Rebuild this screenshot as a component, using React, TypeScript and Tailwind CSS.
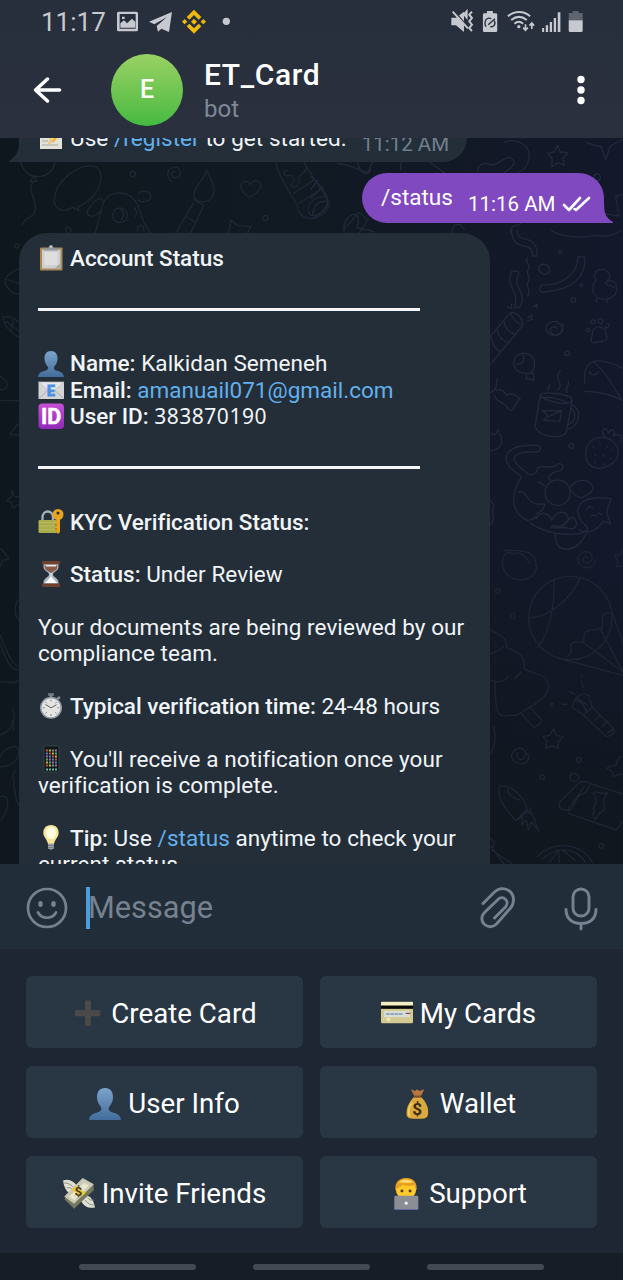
import type { ReactNode } from "react";

type EmojiName =
  | "memo" | "clipboard" | "person" | "mail" | "id" | "lock" | "hourglass" | "stopwatch"
  | "phone" | "bulb" | "plus" | "card" | "bag" | "wings" | "support";

const keypadColors = ["#c9544b", "#5fae62", "#5585c9", "#d8b04a", "#b66bb0"];

const emojiArt: Record<EmojiName, ReactNode> = {
  memo: (
    <>
      <rect x="2" y="3" width="22" height="21" fill="#e4e1d8" />
      <path d="M4 8h9M4 12h7M4 16h6M4 20h16" stroke="#a9a79f" strokeWidth="1" />
      <path d="M10 19l2-5L21 3l4 3-9 11z" fill="#f0b92c" />
      <path d="M12 14L21 3l2 1.500-9 11z" fill="#ffdc66" />
      <path d="M10 19l2-5 4 3z" fill="#e8c79c" />
      <path d="M21 3l2-2 4 3-2 2z" fill="#e7837c" />
    </>
  ),
  clipboard: (
    <>
      <rect x="2" y="2.500" width="22.500" height="23" rx="1" fill="#a98758" />
      <path d="M4 4.500h18.500V23.500H4z" fill="#cfcfd1" />
      <rect x="6.500" y="7" width="13" height="13" fill="#dededd" />
      <path d="M5 5.500l3-2.500h2.500c0-4 5-4 5 0H18l3 2.500z" fill="#8f959b" />
      <circle cx="13" cy="1.700" r="1" fill="#d5d8da" />
      <path d="M22.500 23.500l-5.500-1 5.500-4z" fill="#aaa9a6" />
    </>
  ),
  person: (
    <>
      <defs>
        <linearGradient id="personFill" x1="0" y1="0" x2="0" y2="1">
          <stop offset="0" stopColor="#7ba4cb" />
          <stop offset="1" stopColor="#426c9b" />
        </linearGradient>
      </defs>
      <path
        d="M13 0C8.500 0 6.300 3.400 6.500 8c.1 3 1.500 5.500 3.200 7.500.8 2 .1 3.400-2 4.100C3 21 .5 22 0 26h26c-.5-4-3-5-7.700-6.400-2.100-.7-2.800-2.100-2-4.100C18 13.500 19.400 11 19.500 8 19.700 3.400 17.500 0 13 0z"
        fill="url(#personFill)"
      />
    </>
  ),
  mail: (
    <>
      <rect x="0.500" y="5" width="25.500" height="17" fill="#d3d4d6" />
      <path d="M1 21.500l8.500-8M25.500 21.500l-8.500-8" stroke="#adb0b5" strokeWidth="1" />
      <path d="M.5 5l12.700 11L26 5z" fill="#e6e6e7" stroke="#b9bbc0" strokeWidth="0.700" />
      <text x="13" y="18.500" textAnchor="middle" fontSize="14" fontWeight="700" fill="#4b8fe0" stroke="#4b8fe0">E</text>
    </>
  ),
  id: (
    <>
      <defs>
        <linearGradient id="idFill" x1="0" y1="0" x2="0" y2="1">
          <stop offset="0" stopColor="#c84fd6" />
          <stop offset="1" stopColor="#9028b8" />
        </linearGradient>
      </defs>
      <rect x="0.500" y="0.500" width="25.500" height="25.500" rx="4" fill="url(#idFill)" />
      <text x="13.200" y="20.700" textAnchor="middle" fontSize="21.500" fontWeight="700" fill="#fff" stroke="#fff" strokeWidth="0.500">ID</text>
    </>
  ),
  lock: (
    <>
      <path d="M4.500 12V8.500c0-8 10.500-8 10.500 0V12" fill="none" stroke="#9fb2bd" strokeWidth="2.300" />
      <rect x="0.500" y="11" width="18.500" height="13" rx="1" fill="#a9ac4d" />
      <path d="M1 13.500h18M1 17h18M1 20.500h18" stroke="#b8bb5f" strokeWidth="1" />
      <circle cx="20" cy="5.500" r="5.500" fill="#e9a521" />
      <circle cx="20" cy="4" r="1.500" fill="#232e3a" />
      <path d="M18.500 10h3.500v13l-2 2-1.500-2z" fill="#e9a521" />
      <path d="M17 15h2v2h-2zM17 19h2v2h-2z" fill="#c98313" />
    </>
  ),
  hourglass: (
    <>
      <path d="M5.500 3h15v3c0 4-5.500 5-5.500 7.500s5.500 3.500 5.500 8V24h-15v-2.500c0-4.500 5.500-5.500 5.500-8S5.500 10 5.500 6z" fill="#a9b5bf" />
      <path d="M6.500 4.500h13l-1 4-5.500 3.500L7.500 8.500z" fill="#8b5a45" />
      <path d="M8 4h10v1.500H8z" fill="#e5e9ec" />
      <path d="M7 22l6-6.500 6 6.500z" fill="#fff" />
      <rect x="4" y="0" width="18" height="3.200" rx="1" fill="#71402c" />
      <rect x="4" y="22.500" width="18" height="3.500" rx="1" fill="#71402c" />
      <path d="M12.500 12h1v9h-1z" fill="#eef2f5" />
    </>
  ),
  stopwatch: (
    <>
      <rect x="10" y="0" width="6" height="3" rx="1" fill="#6b7178" />
      <path d="M13 2v4M19 6l3-2" stroke="#858b91" strokeWidth="2.500" />
      <circle cx="13" cy="14.800" r="11" fill="#929aa1" />
      <circle cx="13" cy="14.800" r="9.500" fill="#e4e4e4" />
      <path d="M13 6.500v2M13 21v2M4.800 14.800h2M19.300 14.800h2M7.300 9l1.400 1.400M18.700 9l-1.400 1.400M7.300 20.600l1.400-1.400M18.700 20.600l-1.400-1.400" stroke="#888" strokeWidth="1" />
      <path d="M7.500 11.500l5.500 3.300 5.500-3" fill="none" stroke="#66615e" strokeWidth="1" />
    </>
  ),
  phone: (
    <>
      <rect x="6" y="0" width="15" height="26" rx="1.500" fill="#10161a" stroke="#365048" strokeWidth="0.800" />
      {[0, 1, 2, 3, 4, 5].flatMap((row) =>
        [0, 1, 2, 3].map((col) => (
          <rect key={`${row}-${col}`} x={7.9 + col * 3} y={3.5 + row * 3} width="2" height="2" fill={keypadColors[(row * 2 + col * 3) % 5]} />
        )),
      )}
      <path d="M8 23.500h11" stroke="#66b4a4" strokeWidth="2" strokeDasharray="2 1" />
    </>
  ),
  bulb: (
    <>
      <path d="M13 0c-5 0-7.700 3.600-7.700 7.700 0 4.300 4 6.600 4.700 11.300h6c.7-4.700 4.700-7 4.700-11.300C20.700 3.600 18 0 13 0z" fill="#f7e59a" />
      <ellipse cx="13" cy="8" rx="5" ry="6" fill="#fffbe0" />
      <rect x="10" y="18.500" width="6" height="5.500" rx="1" fill="#9aa0a4" />
      <path d="M10 20.500h6M10 22.500h6" stroke="#6d7377" strokeWidth="0.700" />
      <path d="M12 24h2v1.200h-2z" fill="#666" />
    </>
  ),
  plus: <path d="M10.600 2h4.800v8H23v4.800h-7.600v7.800h-4.800v-7.800H2.500V10h8.100z" fill="#4b4a48" />,
  card: (
    <>
      <rect x="0" y="3" width="26" height="17.500" rx="1" fill="#d4ca91" />
      <path d="M0 4.500h26" stroke="#f2edc4" strokeWidth="2.500" />
      <rect x="0" y="6.200" width="26" height="2.600" fill="#080a09" />
      <rect x="2.500" y="10.500" width="21" height="5" fill="#d9ded8" />
      <path d="M4 13h14" stroke="#91a8bd" strokeWidth="1.600" strokeDasharray="3 .5" />
      <path d="M20 12.500h4" stroke="#7f4f54" strokeWidth="1" />
      <circle cx="6" cy="17.500" r="1.600" fill="#ece7b8" />
    </>
  ),
  bag: (
    <>
      <path d="M8 1l3.500 1.500L13 1l2 1.500L19 1l-3 6h-5z" fill="#ba7840" />
      <path d="M11 7h5c4 4 6.500 8.500 6 14-.3 3-2 4-5 4H9.500c-3.500 0-5-1.500-5-4C4.500 15 7 11 11 7z" fill="#dca93c" />
      <path d="M9 12c-3 4-3.300 8-2 11" fill="none" stroke="#f3ce6a" strokeWidth="1.500" />
      <path d="M10.500 7h6" stroke="#7a4b26" strokeWidth="1.700" />
      <text x="13.200" y="22" textAnchor="middle" fontSize="14" fontWeight="700" fill="#3a2c18">$</text>
    </>
  ),
  wings: (
    <>
      <path d="M0 2c5-2 9 1 12 5L8 13c-4 0-7-4-8-11z" fill="#dfdfd3" />
      <path d="M26 24c-5 1-9-1-11-5l3-5c4 0 7 4 8 10z" fill="#dfdfd3" />
      <path d="M1 4c3 0 6 1.500 8 4M3 8c2-.5 4 0 5 1.500M25 22c-3 0-5-1.500-7-4M25 18c-2 .5-4-.5-5-2" fill="none" stroke="#8f9386" strokeWidth="0.800" />
      <path d="M1 17L17 1l8 5v4L9 25z" fill="#75775e" />
      <path d="M1 15L16 0l9 5L9 21z" fill="#cbcbb3" />
      <path d="M5 15L17 4l4 2L9 18z" fill="#e9e6cf" />
      <path d="M7 9.500l3-3 8.500 5.500-3 3z" fill="#edc537" />
      <text x="12.500" y="15" textAnchor="middle" fontSize="11" fontWeight="700" fill="#4a4022">$</text>
    </>
  ),
  support: (
    <>
      <path d="M3 26c.5-5 3.500-7 10-7s9.500 2 10 7z" fill="#3646b6" />
      <ellipse cx="13" cy="9" rx="8.300" ry="8.800" fill="#ffc92a" />
      <path d="M4.500 10C3.500 3 8-.3 13.500.2 19-.4 22.500 4 21.500 10c-1-1-1.300-2.800-1.500-4.300-4 1.600-8 .3-10-.2C8.800 8 6 7.500 4.500 10z" fill="#e79f20" />
      <path d="M7 4c3-4 9-3.500 12-.5-4 1-8-.5-12 .5z" fill="#ffdc70" />
      <circle cx="9.700" cy="10.500" r="1.200" fill="#593a16" />
      <circle cx="16.300" cy="10.500" r="1.200" fill="#593a16" />
      <rect x="3.500" y="14.500" width="19.500" height="11" rx="1" fill="#8c8e96" />
      <circle cx="13.200" cy="20.500" r="1.200" fill="#fff" />
    </>
  ),
};

function Emoji({ name, className = "size-[26px]" }: { name: EmojiName; className?: string }) {
  return (
    <svg viewBox="0 0 26 26" className={`shrink-0 overflow-visible ${className}`} fontFamily="Roboto, sans-serif">
      {emojiArt[name]}
    </svg>
  );
}

function Line({ icon, children }: { icon?: EmojiName; children?: ReactNode }) {
  return (
    <div className="flex h-[26.36px] items-center whitespace-pre">
      {icon && <Emoji name={icon} className="mr-[6px] size-[26px]" />}
      <span className="leading-[26.36px]">{children}</span>
    </div>
  );
}

function Rule() {
  return (
    <div className="flex h-[26.36px] items-start pt-[10.500px]">
      <div className="h-[3px] w-[382px] bg-[#f4f6f8]" />
    </div>
  );
}

function B({ children }: { children: ReactNode }) {
  return <span className="font-medium tracking-[-0.03px]">{children}</span>;
}

function Doodles() {
  return (
    <svg viewBox="0 138 623 726" className="absolute inset-0 h-full w-full" fill="none" stroke="#22293b" strokeWidth="4" strokeLinecap="round" strokeLinejoin="round">
      <g transform="translate(0 120) scale(.33333)" stroke="#1d2832">
        <path d="M62 128c8 30 30 43 52 42 28-2 48-18 50-42M100 170l-10 14h20l-8-14M100 184c-24 30 16 50 4 90-8 26-34 16-38 42" />
        <path d="M190 272c-44-8-30-70 14-106 44-36 90-38 98-6 8 40-28 86-68 100l2 12-18-10q-14 8-28 10z" />
        <path d="M286 338l24-90c20-40 80-40 104 8l18 52 18 30M310 246c-4-20-24-8-34 8-18 20-18 30-6 34 16 2 24-6 30-14M414 240c12 10 36 4 38-8 6-18-26-24-36-12" />
        <circle cx="360" cy="286" r="22" /><path d="M362 268c12 8 12 22 0 32M404 264c8 10 8 18 0 30M412 334c0-26 20-24 20 0" />
        <circle cx="398" cy="162" r="8" />
        <path d="M514 184c-16-14-14-36 6-42 24-4 30 28 6 32-14 0-16-20-2-20" />
        <path d="M620 150c-4 30-40 46-38 76 2 28 58 28 60-12 2-20-12-44-22-64zM582 238l28 18M580 250l-52 88M610 258l-38 80M558 290l28 16" />
        <path d="M748 232c-22-14-34-38-18-46 14-8 20 8 20 8s12-20 28-8c14 14-8 38-30 46z" />
        <path d="M828 128c4 30 30 70 64 128M912 128l76 120M892 256c2 28 26 48 60 36 30-14 36-28 36-44M862 152c-18-4-10 22 4 14 14-4 24 16 6 28 10 20 32-4 24-16-8-12 24-16 22-34" />
        <path d="M880 220l60-38M896 250l66-42M924 270c0-20 20-42 52-40M926 276c6 24 44 6 56-26" />
        <circle cx="796" cy="294" r="8" />
        <path d="M686 338l6-38 20 16 40 4-10 20M1030 330l46-52 28 20-28 42M202 338c-16-18 10-24 12-4" />
      </g>
      <g transform="translate(311 0) scale(.33333)">
        <path d="M740 436l8 20 22 2-14 18 4 20-18-8-20 12 2-24-14-16 20-4z" />
        <path d="M826 428c20 4 28 12 44 10l14 42 14-42 38-20M80 490c50 6 80 30 90 26s4-30 24-34M140 486c10 50 40 36 38 20M270 510c-10-40 40-70 76-30l54 38M500 516c0-28 20-28 40-22s40-30 60-20 0 34-20 42M580 426c50-14 80 20 74 48-4 24-12 34-28 42" />
        <circle cx="858" cy="532" r="10" />
        <path d="M0 530c30 26 60 60 48 90-12 20-38 34-48 36M20 540l-20 28M36 560l-36 34M4 646c4-30 20-44 44-42M100 696c-8-30 20-60 36-52 20 20-12 38 12 42 16 6 20-2 40 10M420 700c10-40 30-28 40-12M600 700c-10-30 30-20 30-32M864 590c20 28 20 34 10 50l50 8-10-60 20-4" />
      </g>
      <g transform="translate(311 230) scale(.33333)">
        <path d="M602 0c0 34 14 44 38 48s26 18 24 30h14c2-30-8-44-32-50s-28-14-26-28M650 82c-14 16 12 20 2 36s10 20 0 36 10 24-2 44" />
        <path d="M610 232c20-44-30-66-8-108 20-4 26 4 18 16-16 30 32 48 6 92zM800 80c4 54-54 88-106 84-16 12-4 28 6 22 56-4 124-24 122-104zM694 130c-20-10-10-30 8-26 22 2 16 34-6 28-14-6-18-24-4-30" />
        <path d="M856 150c-12-18 0-32 18-32s30 22 16 36c22-8 30 12 26 30-6 30-60 34-70 0-2-16 0-24 10-34zM890 150l-8 10 30 14M856 206v12M888 206v12" />
        <circle cx="787" cy="210" r="7" /><circle cx="811" cy="166" r="4" /><circle cx="747" cy="66" r="5" /><circle cx="769" cy="370" r="7" /><circle cx="781" cy="648" r="7" />
        <path d="M536 322l62-74c16-4 42 18 36 40l-92 110M598 248c8 20 20 32 36 36M578 272c6 26 16 38 38 40M558 298c6 26 18 38 38 40M540 318c6 28 12 40 28 46M590 230l10 6 2-14M650 272l14-4-2-12-12 8M666 230l14-8-4 12" />
        <path d="M754 280c16 26-28 54-46 24-14-28 36-44 44-12 4 24-32 32-34 8 0-10 16-14 20-4" />
        <path d="M846 298c18-12 24-8 36 0l6 28c-8 12-12 8-22 8-14 4-20 8-26 0zM828 296c8-4 12 4 6 8s-10-4-6-8zM844 270c12-4 12 12 2 12-10-2-10-10-2-12zM866 266c12-2 12 14 2 16-8-4-10-12-2-16zM890 280c12 2 0 18-8 12" />
        <path d="M646 430c-44 4-50-54-14-60 38-8 52 46 24 60M616 400c14 10 28-12 20-28M646 430v16l22 4v-20zM538 488l16-12 4-28M556 482c16-8 24 2 30 14 12-10 34 4 42 10-14 8-18 30-26 36-14-2-16-20-26-22-14-4-24-16-24-24" />
        <path d="M688 494l-16 96c10 32 84 40 94 16l18-98c-10-18-90-24-96-14zM688 494c10 20 84 36 94 18M694 504c24-6 58 4 72 14M780 524c36 14 28 60-10 74M780 534c20 20 12 40-8 50M696 542h56l-6 32-48-4 14-12zM712 560l40-18M712 482l4-20M740 482c24-28-16-28 8-60M768 488c-10-18 10-20 4-34" />
        <path d="M822 460c-8-50 16-74 54-66 20 4 48 14 60 22M820 484c40 2 74 6 116 28M846 396c32 18 66 82 86 114M836 424c2 16 20 12 26 2" />
        <path d="M828 650c20-40 72-34 90 0 14 40-20 60-54 66-36-4-46-30-36-66zM882 620c-20-20 6-36 10-10 12-20 24-8 14 8 20-10 32 4 22 18" /><path d="M846 650l2 2M866 640l2 2M888 650l2 2M904 660l2 2M852 674l2 2M876 676l2 2M898 684l2 2M850 696l2 2M878 702l2 2" />
        <path d="M632 740c-24-20-46-26-46-56 2-32 40-40 92-38 16 2 12 18 0 20-32 0-68-2-68 22 0 20 30 28 42 46 14-2 24 4 28-22 20-8 46 8 60-10 18-6 24 18 0 22-20 4-36 16-20 30M632 740c-34 54-36 104 18 132 10-4 26-4 26-20 10-8 24-10 26-30-20 0-28 4-44-10-14-14-20-32-36-26M658 880c24 14 62 32 100 32 38 4 70-4 72-16-8-18-26-18-26-40-6-10-4-34 14-42 20-12 44-12 82-8-4 16-18 34-10 50l8 24-22-6c-20 30-48 40-70 26M680 756c8 0 14 6 20 12M776 780c10-34 60-40 70-8 4 16-24 24-34 32-14-4-22-8-28-18z" />
        <circle cx="740" cy="788" r="38" />
        <path d="M826 838c12-12 10-10 20-4M840 856h18M862 848l10 6M734 910c-10 60 64 70 96-8M676 866c12-24 36-20 46 4 20-34 50-28 50 2-16 20-30 20-50 14M756 884l28-24c24 20 10 44-16 34-20-6-40 6-48-4M538 810c20 20 0 30 8 44 4 20-4 26-8 30M540 610c16 10 16 0 22-12M566 610c14 26 4 50-28 52M720 0c30 24 100 24 136 16 50 8 60-10 76-14" />
      </g>
      <g transform="translate(311 550) scale(.33333)" stroke="#1e2533">
        <circle cx="778" cy="204" r="125" />
        <path d="M728 88c4 80-12 160-48 204M658 204c60-4 130-66 150-122M896 190c-28-6-20 16-22 44-20 10-32 0-46 10-16 4-4 28-12 34-24-4-30-6-38 12 8 12 0 24-10 30M740 324l196 52M820 280l116 86M866 234l70 132M902 184l34 96" />
        <path d="M536 238c40 20 56 34 50 54 40 14 58 28 54 64 30 20 70 12 72 50 4 30-30 50-56 66-24 14-32 26-62 24-40 8-40-10-42-102M536 314c20-14 30-10 42-24M536 390c24 10 48 4 54-10M610 386l20-20M630 490l38 42c20-6 28-20 18-28l-28-32" />
        <circle cx="561" cy="124" r="7" /><circle cx="605" cy="198" r="7" /><circle cx="803" cy="630" r="7" /><circle cx="694" cy="682" r="7" /><circle cx="871" cy="888" r="7" /><circle cx="723" cy="464" r="5" />
        <path d="M784 474c2-28 26-50 48-38l12 36 64 64c4 16-12 22-22 24l-74-70zM794 450c16 4 30 20 32 36M800 446l26 18M844 472l-26 22M854 510l14-14M872 530l18-18M890 548l18-12M812 378l0 4M812 394l4 18M776 424l14 8M752 462l16 2" />
        <path d="M728 536l8 20 20 4-14 16v18l-18-6-20 6 4-20-12-14 20-4zM650 610c14 40-40 40-48 12-2-28 40-40 42-10-4 26-32 18-24-2M936 620c-20 0-16 18-22 26-14 0-22 2-26 10 22 8 16 16 20 22 16 0 10-8 28-6" />
        <path d="M566 708c-12 34 24 80 50 104 10-10 26-10 32-38-10-30-42-70-82-66zM590 716c-4 16 22 32 36 34M620 806l24-24 12 10 4-20M636 790l-4 34 14-14 6 30 10-24 22 28-20-52-14-12" />
        <path d="M806 696l-56 56c-14 24 4 30 20 28l50-70M806 696c20-4 40 2 28 14-10 28-26 20-34 32-16 30-14 36-28 40M836 700l100 32M772 790l144 50 20-28M846 730c18-12 24 8 44-2-16 20-12 30-8 50-16 10-20 14-28 30-20-16 4-18-8-32 6-14 18-20 0-46zM776 684c0-20 24-16 28-4s-20 20-28 4zM678 920c50-50 134-42 166 18M694 928c40-40 100-38 130 10M716 936l28-36 0 38M754 900l40 32M538 864l12 14-8 22 62 42M540 890l38 50M548 530c8 30 4 58-10 80M578 0c46 4 102-6 98 56-10 50-100 44-102-18 0-34 28-34 32-26 28-10 36 10 50 26M854 30c-6 34-50 28-54 0 0-30 42-34 44-8-2 26-36 18-26 2 2-8 14-4 12 0M936 0l-12 16-12-2 8 20-4 16 20-2" />
      </g>
      <g transform="translate(0 230) scale(.33333)" stroke="#1c2630">
        <path d="M58 116c-28 12-46 28-42 42 6 20 20 34 44 34M18 148l40 12M8 262c20-6 40 6 50 16M10 262c4 30 20 44 48 60M18 274l40 30M40 270l-8 36M0 438c20 16 28 24 16 38l-16 4M0 512h56M58 580c-16 16-20 20-28 34h28" /><circle cx="50" cy="48" r="6" />
      </g>
      <g transform="translate(0 480) scale(.33333)" stroke="#1c2630">
        <path d="M36 32l8 18h14M36 32l-2 20-14 10 14 6 4 14 20-8M0 206c20 10 12 20 28 30l-20 6-8 20M56 360c-16 14-12 54 2 58M0 466c16 36 34 90 58 94M0 490c16 44 34 90 58 78M0 608c20-8 40 8 58-8M38 686c10 20 0 40 2 64" />
      </g>
      <g transform="translate(0 720) scale(.33333)" stroke="#1c2630">
        <path d="M36 0c8 20-20 40-36 46M0 112c8-24 44-40 54-28 8 36-20 56-54 56M48 150c-20 20 0 28-8 46 12 16 0 36 16 60M0 230c40-14 20 60 0 72" />
      </g>
    </svg>
  );
}

function StatusBar() {
  return (
    <div className="flex h-[44px] items-center pl-[41px] pr-[39px] text-[#c6c9cf]">
      <span className="w-[76px] text-[26px] leading-[30px]">11:17</span>
      <svg viewBox="351 27 342 75" className="-mt-[2px] h-[25px] w-[114px]" fill="currentColor">
        <path fillRule="evenodd" d="M356 35h53q5 0 5 5v49q0 5-5 5h-53q-5 0-5-5V40q0-5 5-5zm3 7v44h48V42z" />
        <path d="M361 83V70l11-9 9 9 15-14 10 10v17zM366 50h8v7h-8z" />
        <path d="M447 65l69-29-9 60-23-10-10 9-4-17 31-27-38 22z" />
        <g fill="#f0b90b">
          <path d="M582 29l22 22-8 8-14-14-14 14-8-8zM582 101l22-22-8-8-14 14-14-14-8 8zM582 56l9 9-9 9-9-9zM554 57l8 8-8 8-8-8zM610 57l8 8-8 8-8-8z" />
        </g>
        <circle cx="679" cy="64" r="11" />
      </svg>
      <svg viewBox="417 27 400 75" className="-mt-[2px] ml-auto h-[25px] w-[133px]" fill="currentColor">
        <path d="M418 53h14l24-18v61l-24-20h-14z" />
        <path d="M427 34l44 51" stroke="#27303d" strokeWidth="5" />
        <path d="M422 35l46 50" stroke="currentColor" strokeWidth="6" />
        <path d="M464 34l-8 9 8 9zM480 35l-8 9 8 10-8 10 8 10-8 10 8 9" fill="none" stroke="currentColor" strokeWidth="6" />
        <path d="M525 33h18v7h9q4 0 4 4v48q0 4-4 4h-35q-4 0-4-4V44q0-4 4-4h8z" />
        <path d="M522 80c-8-18 4-30 16-24M547 62c6 12-2 20-12 18M529 74l20-18" stroke="#27303d" strokeWidth="4" fill="none" />
        <path d="M588 49c20-17 47-17 67 0M598 60c15-12 32-12 47 0M608 71c8-7 18-7 26 0" stroke="currentColor" strokeWidth="6" fill="none" />
        <circle cx="621" cy="80" r="5" />
        <path d="M641 73v17m-7-7l7 8 7-8M660 87V70m-7 7l7-8 7 8" stroke="currentColor" strokeWidth="5" fill="none" />
        <path d="M691 84h6v12h-6zM702 76h7v20h-7zM714 66h7v30h-7zM726 54h7v42h-7zM738 37h8v59h-8z" />
        <path d="M783 33h18v6h12v22h-42V39h12z" opacity="0.350" />
        <path d="M771 61h42v31q0 4-4 4h-34q-4 0-4-4z" />
      </svg>
    </div>
  );
}

const keys: { icon: EmojiName; label: string }[] = [
  { icon: "plus", label: "Create Card" },
  { icon: "card", label: "My Cards" },
  { icon: "person", label: "User Info" },
  { icon: "bag", label: "Wallet" },
  { icon: "wings", label: "Invite Friends" },
  { icon: "support", label: "Support" },
];

export default function App() {
  return (
    <div className="flex h-[1280px] w-full flex-col overflow-hidden bg-[#1d2632] font-['Roboto',sans-serif] text-[22.5px] text-[#f1f4f7]">
      <header className="h-[138px] shrink-0 bg-linear-to-b from-[#272e3c] to-[#2a303e]">
        <StatusBar />
        <div className="flex h-[92px] items-center pl-[32px] pr-[38px]">
          <svg viewBox="0 0 30 28" className="h-[28px] w-[30px]" fill="none" stroke="#fff" strokeWidth="3.500" strokeLinecap="round" strokeLinejoin="round">
            <path d="M15.500 3L3.500 14l12 11M3.500 14h24" />
          </svg>
          <div className="ml-[49px] flex size-[72px] items-center justify-center rounded-full bg-linear-to-b from-[#98d164] to-[#42ba40] text-[25px] font-medium text-white">E</div>
          <div className="mt-[2px] ml-[21px] flex flex-col">
            <span className="text-[30px] leading-[34px] font-medium tracking-[0.6px] text-white">ET_Card</span>
            <span className="mt-[2px] text-[24px] leading-[30px] text-[#7f8997]">bot</span>
          </div>
          <svg viewBox="0 0 8 30" className="ml-auto h-[30px] w-[8px]" fill="#fff">
            <circle cx="4" cy="4.500" r="3.700" /><circle cx="4" cy="15" r="3.700" /><circle cx="4" cy="25.500" r="3.700" />
          </svg>
        </div>
      </header>

      <main className="relative h-[726px] shrink-0 overflow-hidden bg-linear-to-r from-[#0f171e] via-[#111923] to-[#13182a]">
        <div className="absolute inset-0 bg-linear-to-b from-transparent from-60% to-[#10171e]" />
        <Doodles />
        <div className="relative flex flex-col">
          <div className="relative ml-[19px] h-[24px] w-[448px] rounded-br-[26px] bg-[#232e39] pl-[19px]">
            <svg viewBox="0 0 11 24" className="absolute top-0 -left-[10px] h-[24px] w-[11px]" fill="#232e39">
              <path d="M10 0v5c0 7-3 14-10 18v1h11V0z" />
            </svg>
            <div className="-mt-[13px] flex items-start tracking-[0.06px]">
              <Line icon="memo">Use <span className="text-[#62b0ed]">/register</span> to get started.</Line>
              <span className="mt-[7px] ml-[15px] text-[20.500px] leading-[24px] tracking-normal whitespace-pre text-[#72808e]">11:12 AM</span>
            </div>
          </div>

          <div className="relative mt-[11px] ml-[362px] flex h-[50px] w-[242px] rounded-l-[25px] rounded-tr-[25px] bg-[#8049bf] pl-[19px] text-white">
            <svg viewBox="0 0 14 22" className="absolute -right-[9px] bottom-0 h-[22px] w-[14px]" fill="#8049bf">
              <path d="M0 0h5v4c0 8 2 13 9 17v1H0z" />
            </svg>
            <span className="mt-[11px] w-[87px] leading-[26px]">/status</span>
            <span className="mt-[19px] w-[94px] text-[20.500px] leading-[24px] whitespace-pre">11:16 AM</span>
            <svg viewBox="0 0 30 18" className="mt-[22px] h-[18px] w-[30px] shrink-0" fill="none" stroke="#fff" strokeWidth="2.600" strokeLinecap="round" strokeLinejoin="round">
              <path d="M2 10l5 5L18 3M12.500 14l1.500 1L27 3" />
            </svg>
          </div>

          <section className="mt-[10px] ml-[19px] h-[660px] w-[471px] rounded-t-[28px] bg-[#232e39] pt-[12px] pl-[19px] tracking-[0.065px]">
            <Line icon="clipboard"><B>Account Status</B></Line>
            <Line />
            <Rule />
            <Line />
            <Line icon="person"><B>Name:</B> Kalkidan Semeneh</Line>
            <Line icon="mail"><B>Email:</B> <span className="tracking-normal text-[#62b0ed]">amanuail071@gmail.com</span></Line>
            <Line icon="id"><B>User ID:</B> <span className="font-['Noto_Sans',sans-serif] text-[21px] tracking-[0.5px]">383870190</span></Line>
            <Line />
            <Rule />
            <Line />
            <Line icon="lock"><B>KYC Verification Status:</B></Line>
            <Line />
            <Line icon="hourglass"><B>Status:</B> Under Review</Line>
            <Line />
            <Line>Your documents are being reviewed by our</Line>
            <Line>compliance team.</Line>
            <Line />
            <Line icon="stopwatch"><B>Typical verification time:</B><span className="tracking-[-0.06px]"> 24-48 hours</span></Line>
            <Line />
            <Line icon="phone">You'll receive a notification once your</Line>
            <Line>verification is complete.</Line>
            <Line />
            <Line icon="bulb"><B>Tip:</B> Use <span className="text-[#62b0ed]">/status</span> anytime to check your</Line>
            <div className="flex w-[433px] justify-between">
              <Line>current status.</Line>
              <span className="mt-[9px] text-[20px] leading-[24px] text-[#72808e]">11:16 AM</span>
            </div>
          </section>
        </div>
      </main>

      <div className="flex h-[85px] shrink-0 items-center bg-[#222d3a] pt-[2px] pl-[26px] pr-[25px] text-[#768290]">
        <svg viewBox="0 0 42 42" className="size-[42px]" fill="none" stroke="currentColor" strokeWidth="2.700" strokeLinecap="round">
          <circle cx="21" cy="21" r="19" />
          <path d="M12 25.500c4 7 14 7 18 0" />
          <ellipse cx="14.500" cy="17" rx="2.300" ry="3" fill="currentColor" stroke="none" />
          <ellipse cx="27.500" cy="17" rx="2.300" ry="3" fill="currentColor" stroke="none" />
        </svg>
        <div className="ml-[18px] h-[42px] w-[4px] bg-[#4d9cdc]" />
        <span className="-ml-[2px] text-[30.7px] leading-[36px]">Message</span>
        <svg viewBox="0 0 36 42" className="ml-auto h-[42px] w-[36px]" fill="none" stroke="currentColor" strokeWidth="2.900" strokeLinecap="round">
          <path d="M3 16.500L14.500 5c5-5 12-4 16 0s4 11 0 16L16.500 37c-4 4-9 3-12 .5s-4-8 0-12L18.500 12c4-4 12 2 7 8L14.500 31" />
        </svg>
        <svg viewBox="0 0 34 46" className="ml-[48px] h-[46px] w-[34px]" fill="none" stroke="currentColor" strokeWidth="2.900" strokeLinecap="round">
          <rect x="9" y="4" width="16" height="27" rx="8" />
          <path d="M2 24.500c0 9 6 14 15 14s15-5 15-14M17 38.500V44" />
        </svg>
      </div>

      <div className="grid grid-cols-2 gap-x-[17px] gap-y-[18px] px-[26px] pt-[27px]">
        {keys.map((key) => (
          <button key={key.label} className="flex h-[72px] items-center justify-center rounded-[6px] bg-[#293644] text-[27.7px] text-white">
            <Emoji name={key.icon} className="mt-[4px] mr-[7px] size-[32px]" />
            <span className="mt-[4px] leading-[34px]">{key.label}</span>
          </button>
        ))}
      </div>

      <nav className="mt-auto flex h-[27px] items-center justify-center gap-[57px] bg-[#171d27]">
        {["recents", "home", "back"].map((name) => (
          <div key={name} className="h-[6px] w-[117px] rounded-full bg-[#434953]" />
        ))}
      </nav>
    </div>
  );
}
